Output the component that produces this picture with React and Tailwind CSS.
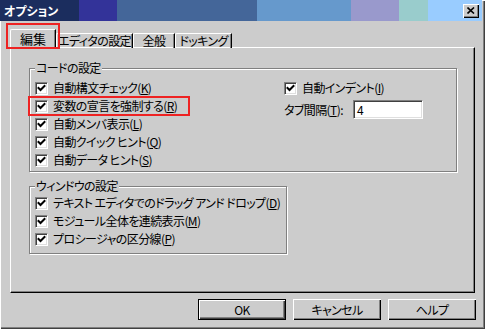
import React from "react";

const FONT = "[font-family:'Noto_Sans_CJK_JP',sans-serif] [font-feature-settings:'palt']";

function Check() {
  return (
    <span className="w-[13px] h-[13px] shrink-0 bg-white border-t border-l border-[#808080] border-r border-b border-r-white border-b-white shadow-[inset_1px_1px_0_#404040,inset_-1px_-1px_0_#dfdfdf] flex items-center justify-center">
      <svg width="9" height="9" viewBox="0 0 9 9">
        <path d="M1.5 4 L3.5 6 L7.5 2" stroke="#000" strokeWidth="2" fill="none" strokeLinecap="square" />
      </svg>
    </span>
  );
}

function Row({ children }) {
  return (
    <div className="flex items-center gap-[5px] h-[18px] text-[12px] tracking-[-0.6px] leading-[14px] text-black whitespace-nowrap">
      <Check />
      <span>{children}</span>
    </div>
  );
}

function M({ k }) {
  return (
    <span>
      (<span className="underline underline-offset-1">{k}</span>)
    </span>
  );
}

function Group({ label, className, children }) {
  return (
    <div className={"relative border border-[#808080] shadow-[inset_1px_1px_0_#fff,1px_1px_0_#fff] " + className}>
      <span className="absolute -top-[8px] left-[5px] bg-[#cccccc] px-[1px] text-[12px] tracking-[-0.6px] leading-[14px] text-black whitespace-nowrap">{label}</span>
      {children}
    </div>
  );
}

function Btn({ children, def }) {
  return (
    <div className={"w-[88px] h-[21px] flex items-center justify-center text-[12px] tracking-[-0.6px] text-black bg-[#cccccc] " + (def ? "border border-black shadow-[inset_1px_1px_0_#fff,inset_-1px_-1px_0_#404040,inset_-2px_-2px_0_#808080]" : "shadow-[inset_1px_1px_0_#fff,inset_-1px_-1px_0_#000,inset_-2px_-2px_0_#808080]")}>
      {children}
    </div>
  );
}

function Tab({ children, w }) {
  return (
    <div className={"h-[15px] flex items-center justify-center whitespace-nowrap text-[12px] tracking-[-0.6px] leading-[14px] text-black border-t border-l border-white rounded-tl-[2px] shadow-[inset_-1px_0_0_#808080] border-r border-r-black " + w}>
      {children}
    </div>
  );
}

export default function App() {
  return (
    <div className={"w-[485px] h-[329px] bg-[#cccccc] relative flex flex-col shadow-[inset_1px_1px_0_#fff,inset_-1px_-1px_0_#404040,inset_-2px_-2px_0_#808080] " + FONT}>
      {/* Title bar */}
      <div className="h-[21px] w-[482px] flex items-center bg-[linear-gradient(to_right,#1b2d5e_0_79px,#333399_79px_117px,#446699_117px_257px,#6699cc_257px_351px,#9999cc_351px_399px,#99cccc_399px_428px,#99ccff_428px)]">
        <span className="pl-[4px] text-white font-bold text-[12px] leading-[14px]">オプション</span>
        <div className="ml-auto mr-[3px] w-[16px] h-[14px] bg-[#cccccc] shadow-[inset_1px_1px_0_#fff,inset_-1px_-1px_0_#000,inset_-2px_-2px_0_#808080] flex items-center justify-center">
          <svg width="8" height="7" viewBox="0 0 8 7">
            <path d="M0.5 0.5 L7 6.5 M7 0.5 L0.5 6.5" stroke="#000" strokeWidth="1.6" fill="none" />
          </svg>
        </div>
      </div>

      {/* Tabs */}
      <div className="relative z-10 mt-[8px] ml-[10px] flex items-end h-[19px] -mb-[1px]">
        <div className="w-[46px] h-[19px] bg-[#cccccc] flex items-center justify-center text-[13px] leading-[14px] text-black border-t border-l border-white rounded-tl-[2px] border-r border-r-black shadow-[inset_-1px_0_0_#808080] pb-[1px]">
          編集
        </div>
        <Tab w="w-[77px]">エディタの設定</Tab>
        <Tab w="w-[42px]">全般</Tab>
        <Tab w="w-[57px]">ドッキング</Tab>
      </div>

      {/* Red annotation around selected tab */}
      <div className="absolute left-[6px] top-[23px] w-[54px] h-[26px] border-2 border-[#ee2222] z-20 pointer-events-none" />

      {/* Panel */}
      <div className="ml-[10px] w-[465px] h-[246px] border-t border-l border-white border-r border-b border-r-black border-b-black shadow-[inset_-1px_-1px_0_#808080] pt-[20px] pl-[18px]">
        <Group label="コードの設定" className="w-[428px] h-[104px]">
          <div className="flex pt-[10px] pl-[5px]">
            <div className="flex flex-col w-[249px]">
              <Row>自動構文チェック<M k="K" /></Row>
              <div className="relative">
                <Row>変数の宣言を強制する<M k="R" /></Row>
                <div className="absolute -left-[7px] -top-[1px] w-[162px] h-[20px] border-2 border-[#ee2222] pointer-events-none" />
              </div>
              <Row>自動メンバ表示<M k="L" /></Row>
              <Row>自動クイック ヒント<M k="Q" /></Row>
              <Row>自動データ ヒント<M k="S" /></Row>
            </div>
            <div className="flex flex-col">
              <Row>自動インデント<M k="I" /></Row>
              <div className="flex items-center mt-[3px] text-[12px] tracking-[-0.6px] leading-[14px] text-black">
                <span className="w-[69px] whitespace-nowrap">タブ間隔<M k="T" />:</span>
                <div className="w-[70px] h-[19px] bg-white border-t border-l border-[#808080] border-r border-b border-r-white border-b-white shadow-[inset_1px_1px_0_#404040,inset_-1px_-1px_0_#dfdfdf] pl-[3px] flex items-center text-[12px]">
                  4
                </div>
              </div>
            </div>
          </div>
        </Group>
        <Group label="ウィンドウの設定" className="w-[258px] h-[68px] mt-[14px]">
          <div className="flex flex-col pt-[7px] pl-[5px]">
            <Row>テキスト エディタでのドラッグ アンド ドロップ<M k="D" /></Row>
            <Row>モジュール全体を連続表示<M k="M" /></Row>
            <Row>プロシージャの区分線<M k="P" /></Row>
          </div>
        </Group>
      </div>

      {/* Buttons */}
      <div className="flex gap-[7px] ml-[198px] mt-[6px]">
        <Btn def>OK</Btn>
        <Btn>キャンセル</Btn>
        <Btn>ヘルプ</Btn>
      </div>
    </div>
  );
}
